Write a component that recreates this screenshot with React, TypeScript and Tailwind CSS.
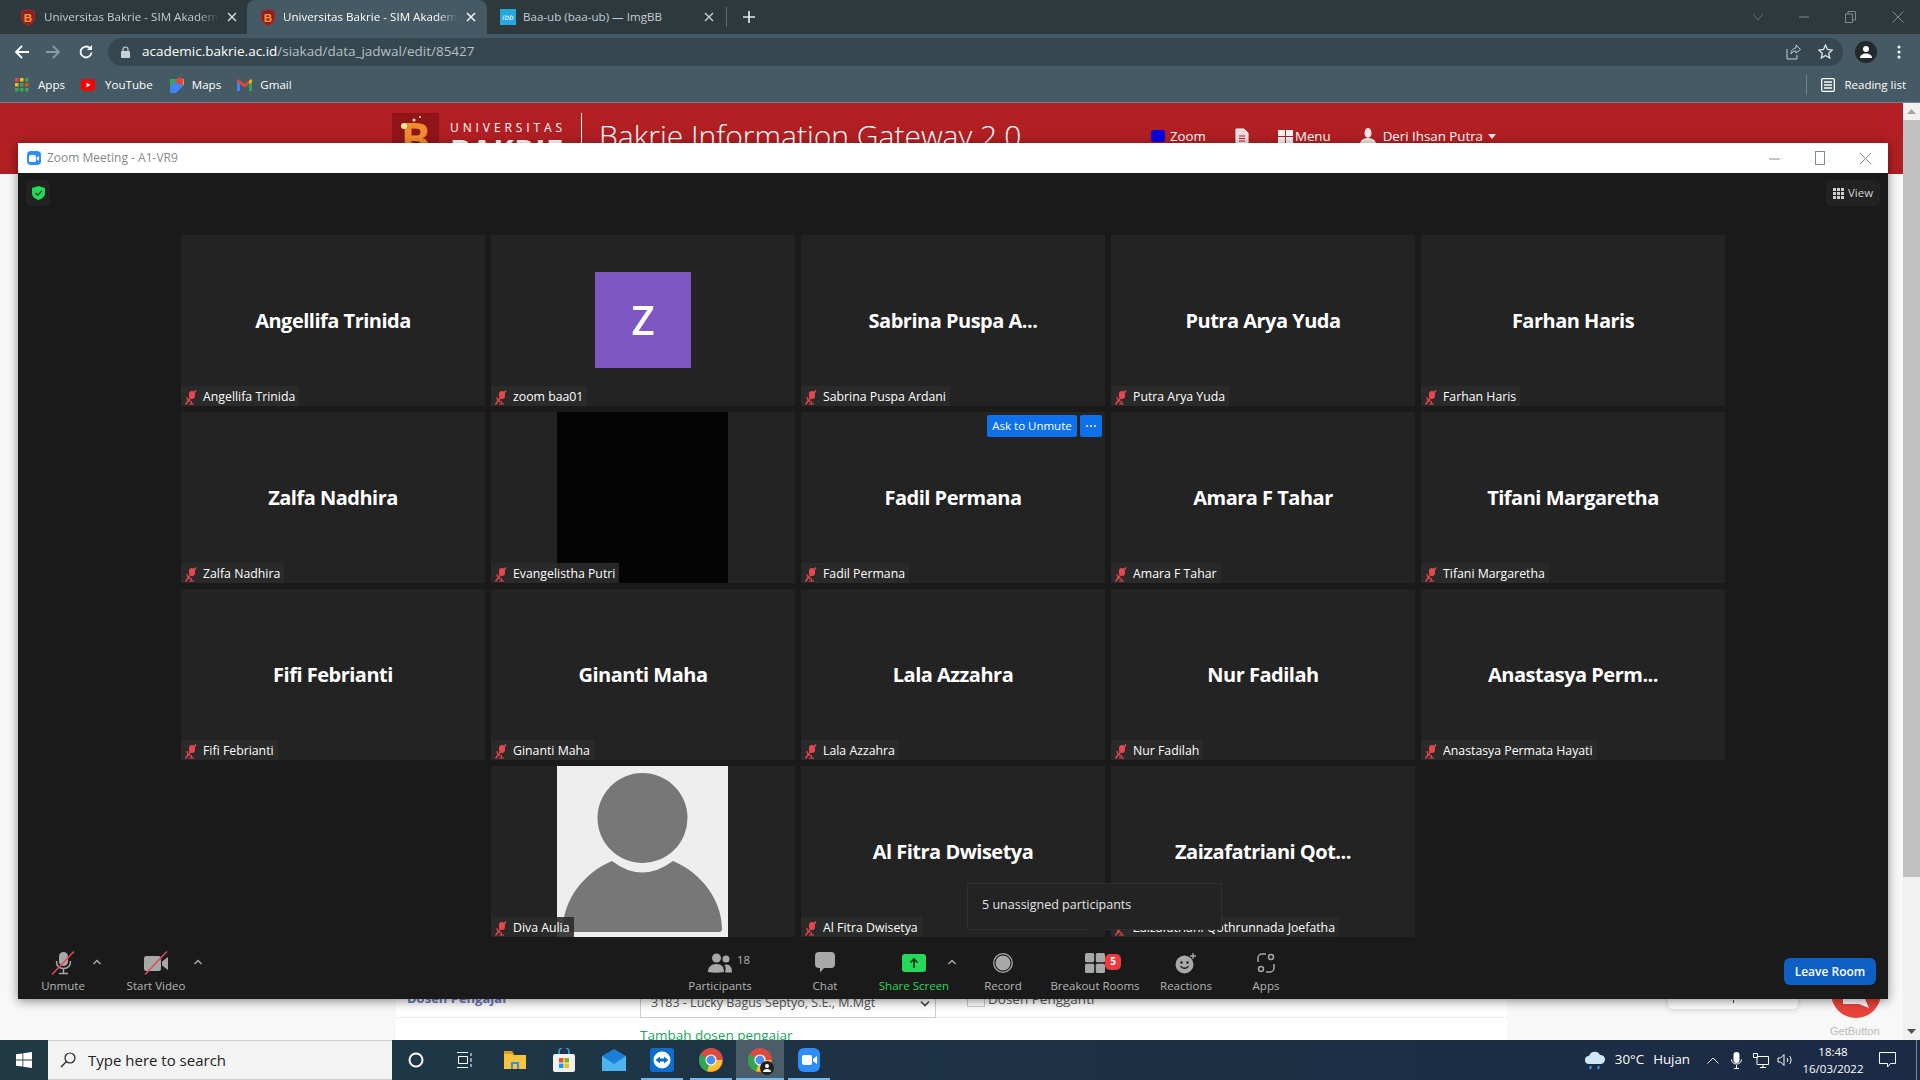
import React from "react";

type TileT = { big?: string; label: string; kind?: "z" | "black" | "photo"; ask?: boolean; start?: boolean };

const tiles: TileT[] = [
  { big: "Angellifa Trinida", label: "Angellifa Trinida" },
  { kind: "z", label: "zoom baa01" },
  { big: "Sabrina Puspa A...", label: "Sabrina Puspa Ardani" },
  { big: "Putra Arya Yuda", label: "Putra Arya Yuda" },
  { big: "Farhan Haris", label: "Farhan Haris" },
  { big: "Zalfa Nadhira", label: "Zalfa Nadhira" },
  { kind: "black", label: "Evangelistha Putri" },
  { big: "Fadil Permana", label: "Fadil Permana", ask: true },
  { big: "Amara F Tahar", label: "Amara F Tahar" },
  { big: "Tifani Margaretha", label: "Tifani Margaretha" },
  { big: "Fifi Febrianti", label: "Fifi Febrianti" },
  { big: "Ginanti Maha", label: "Ginanti Maha" },
  { big: "Lala Azzahra", label: "Lala Azzahra" },
  { big: "Nur Fadilah", label: "Nur Fadilah" },
  { big: "Anastasya Perm...", label: "Anastasya Permata Hayati" },
  { kind: "photo", label: "Diva Aulia", start: true },
  { big: "Al Fitra Dwisetya", label: "Al Fitra Dwisetya" },
  { big: "Zaizafatriani Qot...", label: "Zaizafatriani Qothrunnada Joefatha" },
];

const MicOff = () => (
  <svg width="14" height="15" viewBox="0 0 14 15" className="shrink-0">
    <rect x="5" y="1" width="6" height="8" rx="3" fill="#e5484d" />
    <path d="M3 7c0 3 2 4.500 4.500 4.500M7.500 11.500V14M5 14h5" stroke="#e5484d" strokeWidth="1.200" fill="none" />
    <path d="M1.500 14.500 12 .5" stroke="#e5484d" strokeWidth="1.400" />
  </svg>
);

const Shield = () => (
  <svg width="14" height="17" viewBox="0 0 13 16" className="shrink-0">
    <path d="M6.500 0 13 2v6c0 4-3 6.500-6.500 8C3 14.500 0 12 0 8V2z" fill="#a3262a" />
    <path d="M6.500 1 12 2.800V8c0 3.300-2.500 5.500-5.500 6.800C3.500 13.500 1 11.300 1 8V2.800z" fill="#8f1d22" />
    <text x="6.500" y="12" textAnchor="middle" fontSize="11" fontWeight="700" fill="#f59a32" fontFamily="Liberation Sans, sans-serif">B</text>
  </svg>
);

const Fade = ({ w, children }: { w: string; children: React.ReactNode }) => (
  <span className={`${w} block overflow-hidden whitespace-nowrap [mask-image:linear-gradient(to_right,black_88%,transparent)]`}>{children}</span>
);

const ChromeIcon = ({ s = 24 }: { s?: number }) => (
  <svg width={s} height={s} viewBox="0 0 24 24">
    <circle cx="12" cy="12" r="12" fill="#dd4b3e" />
    <path d="M12 12 1.600 6A12 12 0 0 0 8 23.300L13 14z" fill="#2fa650" />
    <path d="M12 12h11.400A12 12 0 0 1 8 23.300z" fill="#fbc02d" />
    <circle cx="12" cy="12" r="5.600" fill="#fff" />
    <circle cx="12" cy="12" r="4.400" fill="#4a8df0" />
  </svg>
);

const Tile = ({ t }: { t: TileT }) => (
  <div className={`relative flex items-center justify-center bg-[#232323] ${t.start ? "col-start-2" : ""}`}>
    {t.big && <span className="text-[20px] font-bold text-white whitespace-nowrap tracking-[-0.5px]">{t.big}</span>}
    {t.kind === "z" && (
      <div className="mb-[2px] flex h-[96px] w-[96px] items-center justify-center bg-[#7e57c2] text-[40px] font-semibold text-white">Z</div>
    )}
    {t.kind === "black" && <div className="mr-px h-full w-[171px] bg-[#040404]" />}
    {t.kind === "photo" && (
      <div className="mr-px h-full w-[171px] bg-[#eeeeee]">
        <svg width="171" height="171" viewBox="0 0 171 171">
          <circle cx="85.500" cy="52" r="45" fill="#777" />
          <path d="M55 95Q85 118 116 95C145 107 165 135 165 163Q165 166 162 166L9 166Q6 166 6 163C6 135 26 107 55 95Z" fill="#777" />
        </svg>
      </div>
    )}
    {t.ask && (
      <div className="absolute right-[3px] top-[3px] flex gap-[3px] text-white">
        <div className="flex h-[22px] w-[90px] items-center justify-center rounded-[2px] bg-[#0e71eb] text-[11.500px]">Ask to Unmute</div>
        <div className="flex h-[22px] w-[22px] items-center justify-center rounded-[2px] bg-[#0e71eb]">
          <svg width="12" height="4" viewBox="0 0 12 4"><circle cx="2" cy="2" r="1" fill="#fff" /><circle cx="6" cy="2" r="1" fill="#fff" /><circle cx="10" cy="2" r="1" fill="#fff" /></svg>
        </div>
      </div>
    )}
    <div className="absolute bottom-0 left-0 flex h-[20px] items-center gap-[5px] bg-[#2b2b2b]/90 pl-[3px] pr-[4px] pt-[2px] text-[12.300px] text-white whitespace-nowrap">
      <MicOff />
      <span>{t.label}</span>
    </div>
  </div>
);

const Caret = () => (
  <svg width="10" height="6" viewBox="0 0 10 6"><path d="M1.500 5 5 1.500 8.500 5" stroke="#a9a9a9" strokeWidth="1.500" fill="none" /></svg>
);

const ToolBtn = ({ w, label, green, caret, children }: { w: string; label: string; green?: boolean; caret?: string; children: React.ReactNode }) => (
  <div className={`relative flex ${w} shrink-0 flex-col items-center`}>
    <div className="flex h-[41px] items-center justify-center pt-[10px]">{children}</div>
    <span className={`text-[11.500px] leading-[16px] whitespace-nowrap ${green ? "text-[#23d959]" : "text-[#b4b4b4]"}`}>{label}</span>
    {caret && <span className={`absolute top-[22px] flex ${caret}`}><Caret /></span>}
  </div>
);

const TabClose = ({ c }: { c: string }) => (
  <svg width="10" height="10" viewBox="0 0 10 10" className="shrink-0"><path d="M1 1l8 8M9 1 1 9" stroke={c} strokeWidth="1.400" /></svg>
);

export default function App() {
  return (
    <div className="flex h-screen w-[1920px] flex-col overflow-hidden bg-white [font-family:'Open_Sans',sans-serif]">
      {/* tabs */}
      <div className="flex h-[34px] shrink-0 items-center bg-[#2e393e]">
        <div className="flex h-full w-[247px] items-center pl-[21px] pr-[10px] text-[11.600px] text-[#c4cdd1]">
          <Shield />
          <Fade w="w-[175px] ml-[9px]">Universitas Bakrie - SIM Akademi</Fade>
          <span className="ml-[8px]"><TabClose c="#d7dde0" /></span>
        </div>
        <div className="flex h-full w-[240px] items-center rounded-t-[8px] bg-[#455a64] pl-[14px] text-[11.600px] text-white">
          <Shield />
          <Fade w="w-[175px] ml-[8px]">Universitas Bakrie - SIM Akademi</Fade>
          <span className="ml-[8px]"><TabClose c="#ffffff" /></span>
        </div>
        <div className="flex h-full w-[239px] items-center pl-[13px] text-[11.600px] text-[#c4cdd1]">
          <span className="flex h-[16px] w-[16px] shrink-0 items-center justify-center bg-[#26a7de] text-[8px] italic text-white">ibb</span>
          <span className="ml-[7px] w-[181px] whitespace-nowrap">Baa-ub (baa-ub) — ImgBB</span>
          <TabClose c="#c4cdd1" />
        </div>
        <div className="h-[20px] w-px bg-[#5b6a70]" />
        <svg width="14" height="14" viewBox="0 0 14 14" className="ml-[15px]"><path d="M7 1v12M1 7h12" stroke="#e4e8ea" strokeWidth="1.700" /></svg>
        <div className="ml-auto flex items-center gap-[36px] pr-[16px]">
          <svg width="10" height="10" viewBox="0 0 10 10"><path d="M0 2l5 6 5-6" stroke="#5f6f77" fill="none" /></svg>
          <svg width="10" height="10" viewBox="0 0 10 10"><path d="M0 5h10" stroke="#7d8a90" /></svg>
          <svg width="11" height="12" viewBox="0 0 11 12"><path d="M.5 3h7v8.500h-7zM3 3V.5h7.500V9H8" stroke="#7d8a90" fill="none" /></svg>
          <svg width="12" height="12" viewBox="0 0 12 12"><path d="M.5.500l11 11M11.500.5l-11 11" stroke="#7d8a90" /></svg>
        </div>
      </div>
      {/* toolbar */}
      <div className="flex h-[34px] shrink-0 items-center bg-[#455a64] pl-[14px] pt-[1px]">
        <svg width="16" height="16" viewBox="0 0 16 16"><path d="M15 8H2M8 2 2 8l6 6" stroke="#fff" strokeWidth="1.800" fill="none" /></svg>
        <svg width="16" height="16" viewBox="0 0 16 16" className="ml-[15px]"><path d="M1 8h13M8 2l6 6-6 6" stroke="#8b9ba3" strokeWidth="1.800" fill="none" /></svg>
        <svg width="16" height="16" viewBox="0 0 16 16" className="ml-[17px]"><path d="M13.500 8.500A5.500 5.500 0 1 1 12 4.200" stroke="#fff" strokeWidth="1.800" fill="none" /><path d="M14 1v5H9z" fill="#fff" /></svg>
        <div className="ml-[14px] flex h-[28px] w-[1735px] items-center rounded-full bg-[#37474f] pl-[13px] pr-[10px] text-[13.500px]">
          <svg width="9" height="12" viewBox="0 0 9 12" className="mr-[12px]"><path d="M2 5V3.500a2.500 2.500 0 0 1 5 0V5" stroke="#c7d0d4" fill="none" strokeWidth="1.200" /><rect y="5" width="9" height="7" rx="1" fill="#c7d0d4" /></svg>
          <span className="text-white">academic.bakrie.ac.id</span>
          <span className="text-[#b5c0c5]">/siakad/data_jadwal/edit/85427</span>
          <div className="ml-auto flex items-center gap-[17px]">
            <svg width="15" height="17" viewBox="0 0 15 17"><path d="M1 6v10h10v-4M5 11c0-4 3-6 5-6V2l4.500 4.500L10 10V8c-2 0-4 1-5 3z" stroke="#c7d0d4" fill="none" /></svg>
            <svg width="15" height="15" viewBox="0 0 15 15"><path d="M7.500 1l2 4.500 4.800.5-3.600 3.200 1 4.800-4.200-2.500L3.300 14l1-4.800L.7 6l4.800-.5z" stroke="#dfe4e6" strokeWidth="1.300" fill="none" /></svg>
          </div>
        </div>
        <div className="ml-[12px] flex h-[22px] w-[22px] items-center justify-center rounded-full bg-[#23292c]">
          <svg width="14" height="14" viewBox="0 0 14 14"><circle cx="7" cy="4" r="3" fill="#fff" /><path d="M1 13c0-3 3-4.500 6-4.500S13 10 13 13z" fill="#fff" /></svg>
        </div>
        <svg width="4" height="14" viewBox="0 0 4 14" className="ml-[20px]"><circle cx="2" cy="2" r="1.500" fill="#fff" /><circle cx="2" cy="7" r="1.500" fill="#fff" /><circle cx="2" cy="12" r="1.500" fill="#fff" /></svg>
      </div>
      {/* bookmarks */}
      <div className="flex h-[35px] shrink-0 items-center border-b border-[#6f868f] bg-[#455a64] pb-[1px] pl-[15px] text-[11.600px] text-white">
        <svg width="14" height="14" viewBox="0 0 14 14">
          {[0, 5, 10].map((x, i) => [0, 5, 10].map((y, j) => (
            <rect key={`${i}${j}`} x={x} y={y} width="3.500" height="3.500" fill={["#e8453c", "#fbbc05", "#34a853"][j === 0 ? i : j === 1 ? (i + 1) % 3 : 2]} />
          )))}
        </svg>
        <span className="ml-[9px]">Apps</span>
        <svg width="14" height="12" viewBox="0 0 14 12" className="ml-[16px]"><rect width="14" height="12" rx="3" fill="#f00" /><path d="M5.500 3.500v5l4-2.500z" fill="#fff" /></svg>
        <span className="ml-[10px]">YouTube</span>
        <svg width="14" height="16" viewBox="0 0 14 16" className="ml-[17px]"><path d="M0 2h8l-8 8z" fill="#34a853" /><path d="M0 10 8 2l6 6-8 8H0z" fill="#4285f4" /><path d="M8 2h6v6z" fill="#fbbc05" /><circle cx="10" cy="4" r="3.500" fill="#ea4335" /></svg>
        <span className="ml-[8px]">Maps</span>
        <svg width="15" height="12" viewBox="0 0 15 12" className="ml-[16px]"><path d="M0 1v11h3V5l4.500 3.500L12 5v7h3V1l-1-1-6.500 5L1 0z" fill="#ea4335" /><path d="M0 2v10h3V5z" fill="#4285f4" /><path d="M12 5v7h3V2z" fill="#34a853" /><path d="M12 2 15 0v3l-3 2z" fill="#fbbc05" /></svg>
        <span className="ml-[8px]">Gmail</span>
        <div className="ml-auto flex items-center pr-[14px]">
          <div className="mr-[14px] h-[20px] w-px bg-[#6f868f]" />
          <svg width="14" height="14" viewBox="0 0 14 14" className="mr-[9px]"><rect x=".7" y=".7" width="12.600" height="12.600" rx="1" stroke="#fff" strokeWidth="1.300" fill="none" /><path d="M3 4h8M3 7h8M3 10h8" stroke="#fff" strokeWidth="1.300" /></svg>
          <span className="text-[11.500px]">Reading list</span>
        </div>
      </div>
      {/* page */}
      <div className="relative flex min-h-0 flex-1">
        <div className="flex min-w-0 flex-1 flex-col bg-[#f8f8f8]">
          <div className="flex h-[71px] shrink-0 overflow-hidden bg-[#b11f23] pl-[392px] pt-[10px] text-white">
            <div className="relative h-[50px] w-[47px] shrink-0 bg-[#8f1519] pt-[3px] text-center text-[44px] font-bold leading-[44px] text-[#f08c2e]">
              B
              <svg width="24" height="16" viewBox="0 0 24 16" className="absolute left-[8px] top-[1px]"><circle cx="4" cy="12" r="3" fill="#fde9a0" /><circle cx="14" cy="6" r="1.500" fill="#fde9a0" /><circle cx="20" cy="3" r="1" fill="#fde9a0" /></svg>
            </div>
            <div className="ml-[11px] flex w-[118px] shrink-0 flex-col pt-[7px]">
              <span className="text-[12px] leading-[16px] tracking-[3.900px] whitespace-nowrap">UNIVERSITAS</span>
              <span className="mt-[-1px] text-[31px] font-bold leading-[30px] tracking-[0.5px]">BAKRIE</span>
            </div>
            <div className="ml-[13px] h-[50px] w-px shrink-0 bg-white" />
            <span className="ml-[17px] mt-[3px] w-[552px] shrink-0 self-start text-[30px] font-light leading-[40px] whitespace-nowrap">Bakrie Information Gateway 2.0</span>
            <div className="flex items-center self-start pt-[11px] text-[13.300px] leading-[24px] whitespace-nowrap">
              <span className="h-[12px] w-[14px] rounded-[3px] bg-[#0000e0]" />
              <span className="ml-[5px]">Zoom</span>
              <svg width="14" height="16" viewBox="0 0 14 16" className="ml-[29px]"><path d="M1 1h8l4 4v10H1z" fill="#f3dcdc" stroke="#fff" /><path d="M4 8h6M4 10.500h6M4 13h6" stroke="#b11f23" /></svg>
              <svg width="15" height="13" viewBox="0 0 15 13" className="ml-[29px]"><rect width="7" height="6" fill="#f2f2f2" /><rect x="8" width="7" height="6" fill="#f2f2f2" /><rect y="7" width="7" height="6" fill="#f2f2f2" /><rect x="8" y="7" width="7" height="6" fill="#f2f2f2" /></svg>
              <span className="ml-[2px]">Menu</span>
              <svg width="16" height="16" viewBox="0 0 16 16" className="ml-[29px]"><ellipse cx="8" cy="5" rx="3.500" ry="5" fill="#f2e6e6" /><path d="M0 16c0-4 4-6 8-6s8 2 8 6z" fill="#f2e6e6" /></svg>
              <span className="ml-[7px]">Deri Ihsan Putra</span>
              <svg width="8" height="5" viewBox="0 0 8 5" className="ml-[5px]"><path d="M0 0h8L4 5z" fill="#f2e6e6" /></svg>
            </div>
          </div>
          <div className="min-h-0 flex-1" />
          {/* form remains */}
          <div className="relative flex h-[60px] shrink-0 pl-[396px]">
            <div className="relative h-full w-[1111px] overflow-hidden bg-white text-[13.500px]">
              <div className="flex h-[38px] border-b border-[#eeeeee] pl-[11px] pt-[9px]">
                <span className="w-[233px] text-[13px] font-bold text-[#6a75b5]">Dosen Pengajar</span>
                <div className="mt-[-1px] flex h-[30px] w-[296px] items-center justify-between border border-[#cccccc] pl-[10px] pr-[5px] text-[12.500px] text-[#555] whitespace-nowrap">
                  <span>3183 - Lucky Bagus Septyo, S.E., M.Mgt</span>
                  <svg width="10" height="7" viewBox="0 0 10 7"><path d="M1 1.500 5 5.500 9 1.500" stroke="#444" strokeWidth="1.600" fill="none" /></svg>
                </div>
                <div className="ml-[31px] h-[18px] w-[18px] border border-[#cccccc]" />
                <span className="ml-[3px] text-[#555]">Dosen Pengganti</span>
              </div>
              <div className="pl-[244px] pt-[7px] text-[#22a35a]">Tambah dosen pengajar</div>
            </div>
          </div>
          <div className="absolute bottom-[31px] left-[1668px] flex h-[20px] w-[130px] items-end justify-center rounded-[5px] bg-white shadow-[0_1px_6px_rgba(0,0,0,.15)]">
            <span className="mb-[6px] h-[3px] w-px bg-[#444]" />
          </div>
          <div className="absolute bottom-[22px] left-[1831px] flex h-[50px] w-[50px] items-end justify-center rounded-full bg-[#e74339] pb-[9px]">
            <svg width="26" height="10" viewBox="0 0 26 10"><path d="M0 0h22l4 9-10-4H0z" fill="#fff" /></svg>
          </div>
          <div className="absolute bottom-[1px] left-[1830px] text-[11px] text-[#bbbbbb] [font-family:'Liberation_Sans',sans-serif]">GetButton</div>
        </div>
        {/* page scrollbar */}
        <div className="flex w-[17px] shrink-0 flex-col items-center bg-[#f1f1f1]">
          <div className="flex h-[17px] items-center"><svg width="9" height="5" viewBox="0 0 9 5"><path d="M4.500 0 9 5H0z" fill="#a3a3a3" /></svg></div>
          <div className="h-[757px] w-full bg-[#c1c1c1]" />
          <div className="mt-auto flex h-[17px] items-center"><svg width="9" height="5" viewBox="0 0 9 5"><path d="M0 0h9L4.500 5z" fill="#505050" /></svg></div>
        </div>

        {/* Zoom window */}
        <div className="absolute left-[18px] top-[40px] flex h-[856px] w-[1870px] flex-col shadow-[0_2px_10px_rgba(0,0,0,.45)]">
          <div className="flex h-[30px] shrink-0 items-center bg-white pl-[9px] text-[12px] text-[#8a8a8a]">
            <span className="flex h-[14px] w-[14px] items-center justify-center rounded-[4px] bg-[#2d8cff]">
              <svg width="10" height="7" viewBox="0 0 10 7"><rect width="7" height="7" rx="1.500" fill="#fff" /><path d="M7.500 3 10 1v5L7.500 4z" fill="#fff" /></svg>
            </span>
            <span className="ml-[6px]">Zoom Meeting - A1-VR9</span>
            <div className="ml-auto flex items-center gap-[35px] pr-[17px]">
              <svg width="11" height="11" viewBox="0 0 11 11"><path d="M0 6h11" stroke="#888" /></svg>
              <svg width="10" height="14" viewBox="0 0 10 14"><rect x=".5" y=".5" width="9" height="13" stroke="#888" fill="none" /></svg>
              <svg width="11" height="11" viewBox="0 0 11 11"><path d="M0 0l11 11M11 0 0 11" stroke="#888" /></svg>
            </div>
          </div>
          <div className="flex min-h-0 flex-1 flex-col bg-[#1a1a1a]">
            <div className="flex h-[62px] shrink-0 items-start justify-between pl-[8px] pr-[8px] pt-[7px]">
              <div className="flex h-[26px] w-[24px] items-center justify-center rounded-[5px] bg-[#222222]">
                <svg width="13" height="14" viewBox="0 0 13 14"><path d="M6.500 0 13 2v5c0 3.500-3 6-6.500 7C3 13 0 10.500 0 7V2z" fill="#23d959" /><path d="M3.500 7l2.200 2.200 4-4.200" stroke="#0f3d1e" strokeWidth="1.300" fill="none" /></svg>
              </div>
              <div className="flex h-[26px] w-[54px] items-center justify-center gap-[4px] rounded-[5px] bg-[#222222] text-[11.500px] text-[#d0d0d0]">
                <svg width="11" height="11" viewBox="0 0 11 11" fill="#d0d0d0"><rect width="3" height="3" /><rect x="4" width="3" height="3" /><rect x="8" width="3" height="3" /><rect y="4" width="3" height="3" /><rect x="4" y="4" width="3" height="3" /><rect x="8" y="4" width="3" height="3" /><rect y="8" width="3" height="3" /><rect x="4" y="8" width="3" height="3" /><rect x="8" y="8" width="3" height="3" /></svg>
                View
              </div>
            </div>
            <div className="relative flex h-[702px] shrink-0 justify-center">
              <div className="grid grid-cols-[repeat(5,304px)] auto-rows-[171px] gap-[6px]">
                {tiles.map((t) => <Tile key={t.label} t={t} />)}
              </div>
              <div className="absolute left-[949px] top-[648px] flex h-[47px] w-[255px] items-center border border-[#2e2e2e] bg-[#232323] pb-[3px] pl-[14px] text-[12.500px] text-[#e6e6e6]">
                5 unassigned participants
                <span className="absolute left-[122px] top-[45px] h-0 w-0 border-x-[7px] border-t-[7px] border-x-transparent border-t-[#232323]" />
              </div>
            </div>
            {/* meeting toolbar */}
            <div className="flex h-[62px] shrink-0 bg-[#1a1a1a]">
              <ToolBtn w="w-[90px]" label="Unmute" caret="left-[74px]">
                <svg width="26" height="24" viewBox="0 0 26 24">
                  <rect x="9" y="1" width="9" height="14" rx="4.500" fill="#a8a8a8" />
                  <path d="M6.500 10c0 5 3 7.500 7 7.500s7-2.500 7-7.500M13.500 17.500V22M9 22.500h9" stroke="#a8a8a8" strokeWidth="1.500" fill="none" />
                  <path d="M2 23.500 24 .5" stroke="#e5484d" strokeWidth="1.500" />
                </svg>
              </ToolBtn>
              <ToolBtn w="w-[96px]" label="Start Video" caret="left-[85px]">
                <svg width="26" height="24" viewBox="0 0 26 24">
                  <rect x="1" y="5" width="17" height="15" rx="2.500" fill="#a8a8a8" />
                  <path d="M19 10.500 25 6v13l-6-4.500z" fill="#a8a8a8" />
                  <path d="M2 23.500 24 .5" stroke="#e5484d" strokeWidth="1.500" />
                </svg>
              </ToolBtn>
              <div className="ml-[446px] flex">
                <ToolBtn w="w-[140px]" label="Participants">
                  <svg width="24" height="20" viewBox="0 0 24 20" fill="#a8a8a8"><circle cx="8.500" cy="5" r="4.500" /><path d="M0 19c0-5 3-8 8.500-8s7.500 3 7.500 8q-8 1.500-16 0z" /><circle cx="18" cy="6" r="3.500" /><path d="M17 19.500h7c0-5-1.500-8-6-8l-1.500.5c1.500 2 1.500 5 .5 7.500z" /></svg>
                  <span className="absolute left-[87px] top-[15px] text-[11.500px] leading-[16px] text-[#b4b4b4]">18</span>
                </ToolBtn>
                <ToolBtn w="w-[70px]" label="Chat">
                  <svg width="20" height="21" viewBox="0 0 20 21" fill="#a8a8a8"><path d="M4 0h12a4 4 0 0 1 4 4v8a4 4 0 0 1-4 4H9l-4 4.500V16H4a4 4 0 0 1-4-4V4a4 4 0 0 1 4-4z" /></svg>
                </ToolBtn>
                <ToolBtn w="w-[108px]" label="Share Screen" green caret="left-[87px]">
                  <span className="flex h-[18px] w-[24px] items-center justify-center rounded-[3px] bg-[#23d959]">
                    <svg width="10" height="12" viewBox="0 0 10 12"><path d="M5 11V2M1.500 5.500 5 2l3.500 3.500" stroke="#0b2b14" strokeWidth="1.600" fill="none" /></svg>
                  </span>
                </ToolBtn>
                <ToolBtn w="w-[70px]" label="Record">
                  <svg width="20" height="20" viewBox="0 0 20 20"><circle cx="10" cy="10" r="9.300" stroke="#a8a8a8" strokeWidth="1.300" fill="none" /><circle cx="10" cy="10" r="7.500" fill="#a8a8a8" /></svg>
                </ToolBtn>
                <ToolBtn w="w-[114px]" label="Breakout Rooms">
                  <span className="relative block h-[20px] w-[20px]">
                    <svg width="20" height="20" viewBox="0 0 20 20" fill="#a8a8a8"><rect width="9.200" height="9.200" rx="1.500" /><rect x="10.800" width="9.200" height="9.200" rx="1.500" /><rect y="10.800" width="9.200" height="9.200" rx="1.500" /><rect x="10.800" y="10.800" width="9.200" height="9.200" rx="1.500" /></svg>
                    <span className="absolute left-[20px] top-[1px] flex h-[16px] w-[16px] items-center justify-center rounded-[5px] bg-[#f03a3e] text-[10px] font-bold text-white">5</span>
                  </span>
                </ToolBtn>
                <ToolBtn w="w-[68px]" label="Reactions">
                  <svg width="22" height="22" viewBox="0 0 22 22"><circle cx="9.500" cy="12.500" r="9" fill="#a8a8a8" /><circle cx="6.500" cy="10.500" r="1.200" fill="#1a1a1a" /><circle cx="12.500" cy="10.500" r="1.200" fill="#1a1a1a" /><path d="M5.500 14c1.500 3 6.500 3 8 0" stroke="#1a1a1a" strokeWidth="1.300" fill="none" /><path d="M18 1v6M15 4h6" stroke="#a8a8a8" strokeWidth="1.300" /></svg>
                </ToolBtn>
                <ToolBtn w="w-[92px]" label="Apps">
                  <svg width="18" height="20" viewBox="0 0 18 20" stroke="#a8a8a8" strokeWidth="1.500" fill="none"><path d="M1 9V5a4 4 0 0 1 4-4h4M17 11v4a4 4 0 0 1-4 4H9" /><circle cx="14" cy="4" r="2.500" /><circle cx="4" cy="16" r="2.500" /></svg>
                </ToolBtn>
              </div>
              <div className="ml-auto pr-[12px] pt-[21px]">
                <div className="flex h-[27px] w-[92px] items-center justify-center rounded-[6px] bg-[#0e5fc4] text-[12px] font-semibold text-white">Leave Room</div>
              </div>
            </div>
          </div>
        </div>
      </div>
      {/* taskbar */}
      <div className="flex h-[40px] shrink-0 items-center bg-gradient-to-r from-[#1f3a45] to-[#1b2a45] text-white">
        <div className="flex w-[48px] justify-center">
          <svg width="16" height="16" viewBox="0 0 16 16" fill="#fff"><path d="M0 2.300 6.500 1.400v6.200H0zM7.300 1.300 16 0v7.600H7.300zM0 8.400h6.500v6.200L0 13.700zM7.300 8.400H16V16l-8.700-1.300z" /></svg>
        </div>
        <div className="flex h-full w-[344px] items-center border-y border-[#cfcfcf] bg-[#f3f3f3] pl-[12px] text-[15px] text-[#222]">
          <svg width="16" height="16" viewBox="0 0 16 16" className="mr-[12px]"><circle cx="10" cy="6" r="5" stroke="#222" strokeWidth="1.200" fill="none" /><path d="M6.500 9.500 1 15" stroke="#222" strokeWidth="1.300" /></svg>
          Type here to search
        </div>
        <svg width="16" height="16" viewBox="0 0 16 16" className="ml-[16px]"><circle cx="8" cy="8" r="6.500" stroke="#fff" strokeWidth="2" fill="none" /></svg>
        <svg width="16" height="16" viewBox="0 0 16 16" className="ml-[33px]" stroke="#fff" fill="none"><path d="M0 .5h11M0 15.500h11M1.500 4.500h9v7h-9zM14 1v3M14 6v4M14 12v3" /></svg>
        <span className="ml-[31px] flex">
          <svg width="22" height="18" viewBox="0 0 22 18"><path d="M0 2h8l2 2h12v14H0z" fill="#f9c33c" /><path d="M0 0h8l2 3H0z" fill="#d9a021" /><rect x="7" y="11" width="8" height="7" fill="#3c8dde" /><rect x="9" y="13" width="4" height="5" fill="#f9c33c" /></svg>
        </span>
        <span className="ml-[27px] flex">
          <svg width="22" height="24" viewBox="0 0 22 24"><path d="M6 7V4a5 5 0 0 1 10 0v3" stroke="#2aa8e0" strokeWidth="1.600" fill="none" /><rect y="6" width="22" height="18" rx="2" fill="#f1f1f1" /><rect x="6" y="10" width="4.500" height="4.500" fill="#f25022" /><rect x="11.500" y="10" width="4.500" height="4.500" fill="#7fba00" /><rect x="6" y="15.500" width="4.500" height="4.500" fill="#00a4ef" /><rect x="11.500" y="15.500" width="4.500" height="4.500" fill="#ffb900" /></svg>
        </span>
        <span className="ml-[27px] flex">
          <svg width="24" height="22" viewBox="0 0 24 22"><path d="M0 7 12 0l12 7v15H0z" fill="#1c7ed6" /><path d="M0 7l12 8 12-8v15H0z" fill="#4cb4f0" /></svg>
        </span>
        <span className="relative ml-[12px] flex h-full w-[48px] items-center justify-center">
          <span className="flex h-[24px] w-[24px] items-center justify-center rounded-[3px] bg-[#0e6ecf]">
            <svg width="18" height="18" viewBox="0 0 18 18"><circle cx="9" cy="9" r="8.500" fill="#fff" /><path d="M2.500 9 7 5.500v2h4v-2L15.500 9 11 12.500v-2H7v2z" fill="#0e6ecf" /></svg>
          </span>
          <span className="absolute bottom-0 left-[3px] h-[2px] w-[42px] bg-[#76b9ed]" />
        </span>
        <span className="relative ml-px flex h-full w-[48px] items-center justify-center">
          <ChromeIcon />
          <span className="absolute bottom-0 left-[3px] h-[2px] w-[42px] bg-[#76b9ed]" />
        </span>
        <span className="relative ml-px flex h-full w-[48px] items-center justify-center bg-[#4a5d68]">
          <ChromeIcon />
          <span className="absolute bottom-[5px] right-[10px] flex h-[14px] w-[14px] items-center justify-center rounded-full bg-[#222]">
            <svg width="8" height="8" viewBox="0 0 8 8" fill="#fff"><circle cx="4" cy="2" r="2" /><path d="M0 8c0-2 2-3 4-3s4 1 4 3z" /></svg>
          </span>
          <span className="absolute bottom-0 left-0 h-[2px] w-full bg-[#76b9ed]" />
        </span>
        <span className="relative ml-px flex h-full w-[48px] items-center justify-center">
          <span className="flex h-[24px] w-[22px] items-center justify-center rounded-[6px] bg-[#2d8cff]">
            <svg width="15" height="10" viewBox="0 0 15 10"><rect width="10" height="10" rx="2" fill="#fff" /><path d="M11 4l4-3v8l-4-3z" fill="#fff" /></svg>
          </span>
          <span className="absolute bottom-0 left-[3px] h-[2px] w-[42px] bg-[#76b9ed]" />
        </span>
        <div className="ml-auto flex h-full items-center text-[13.300px]">
          <svg width="22" height="22" viewBox="0 0 22 22"><path d="M5 15a4 4 0 0 1 0-8 6 6 0 0 1 11-1 4.500 4.500 0 0 1 1 9z" fill="#cfe6f7" /><path d="M7 17l-1 3M15 17l-1 3" stroke="#3f9fe8" strokeWidth="2" /></svg>
          <span className="ml-[9px]">30°C</span>
          <span className="ml-[9px]">Hujan</span>
          <svg width="12" height="7" viewBox="0 0 12 7" className="ml-[17px]"><path d="M.5 6.500 6 1l5.500 5.500" stroke="#fff" fill="none" /></svg>
          <svg width="11" height="17" viewBox="0 0 11 17" className="ml-[12px]"><rect x="2.500" width="6" height="11" rx="3" fill="#fff" /><path d="M.5 7.500c0 6 10 6 10 0M5.500 13v3M3 16.500h5" stroke="#fff" fill="none" /></svg>
          <svg width="16" height="15" viewBox="0 0 16 15" className="ml-[11px]" stroke="#fff" fill="none"><path d="M4 3.500h11.500v8h-11.500zM10 11.500v3M7 14.500h6M.5.500h4v4h-4z" /></svg>
          <svg width="16" height="14" viewBox="0 0 16 14" className="ml-[8px]" stroke="#fff" fill="none"><path d="M1 5v4h2.500L7 12.500V1.500L3.500 5zM10 5c1 1 1 3 0 4M12.500 3c2 2 2 6 0 8" /></svg>
          <div className="ml-[5px] flex w-[70px] flex-col items-center text-[11.500px] leading-[17px]">
            <span>18:48</span>
            <span>16/03/2022</span>
          </div>
          <svg width="17" height="16" viewBox="0 0 17 16" className="ml-[11px]" stroke="#fff" fill="none"><path d="M.5.500h16v11h-5l-3 3.500v-3.500h-8z" /></svg>
          <div className="ml-[20px] mr-[3px] h-full w-px bg-[#7e8a95]" />
        </div>
      </div>
    </div>
  );
}
